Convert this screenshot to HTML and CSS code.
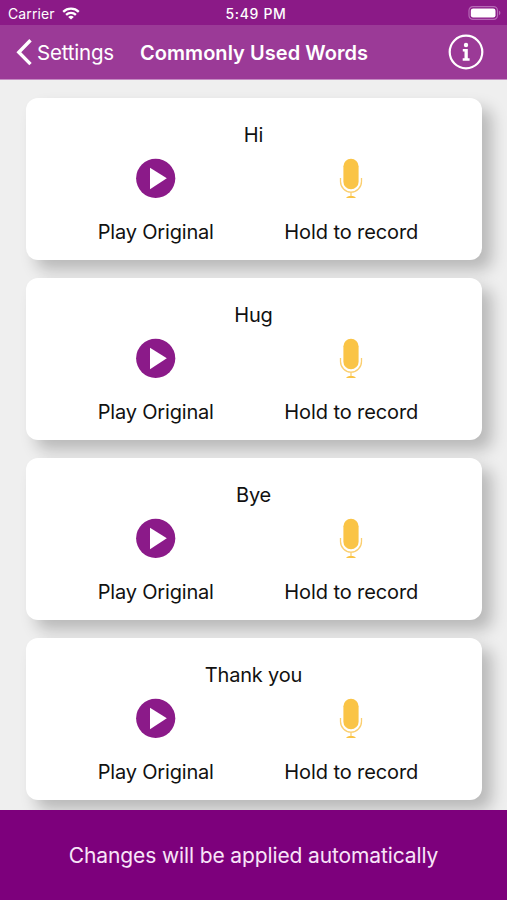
FILE: index.html
```html
<!DOCTYPE html>
<html lang="en">
<head>
<meta charset="utf-8">
<title>Commonly Used Words</title>
<link rel="stylesheet" href="styles.css">
</head>
<body>
<svg width="0" height="0" class="defs">
  <symbol id="play" viewBox="0 0 40 40">
    <circle cx="19.7" cy="20.3" r="19.6" fill="#8b1a89"/>
    <path d="M14 9.800 L30.800 20.300 L14 31.200 Z" fill="#fff"/>
  </symbol>
  <symbol id="mic" viewBox="0 0 24 40">
    <rect x="4.400" y="0.700" width="15.200" height="30.600" rx="7.600" fill="#fac446"/>
    <path d="M1.500 20v3.400a10.500 10.800 0 0 0 21 0V20M12 34.200v4" fill="none" stroke="#fbcf70" stroke-width="1.300"/>
    <path d="M7.200 39.900c.5-1.500 2.300-1.900 4.800-1.900s4.300.4 4.800 1.900z" fill="#fac446"/>
  </symbol>
</svg>
<div class="screen">
  <header>
    <div class="status">
      <div class="side"><span class="carrier">Carrier</span>
        <svg class="wifi" width="18" height="13" viewBox="0 0 18 13" fill="none" stroke="#fff" stroke-width="2.300">
          <path d="M1.200 4.800a11.200 11.200 0 0 1 15.600 0M4.100 7.900a7 7 0 0 1 9.800 0"/>
          <path d="M9 12.500 6.200 9.900a4.200 4.200 0 0 1 5.600 0z" fill="#fff" stroke="none"/>
        </svg>
      </div>
      <span class="time">5:49 PM</span>
      <div class="side end">
        <svg width="33" height="15" viewBox="0 0 33 15">
          <rect x="1" y="0.600" width="28.500" height="12.800" rx="4" fill="none" stroke="#b66ab6" stroke-width="1.200"/>
          <rect x="2.800" y="2.400" width="24.700" height="9.200" rx="2.300" fill="#fff"/>
          <path d="M31 4.800a2.400 2.400 0 0 1 0 4.400z" fill="#b66ab6"/>
        </svg>
      </div>
    </div>
    <nav>
      <svg class="chevron" width="17" height="28" viewBox="0 0 17 28"><path d="M15.500 2.300 3.800 14.200l11.700 11.900" fill="none" stroke="#fff" stroke-width="3.400"/></svg>
      <span class="back">Settings</span>
      <h1>Commonly Used Words</h1>
      <svg class="info" width="36" height="36" viewBox="0 0 36 36">
        <circle cx="18" cy="18" r="16.300" fill="none" stroke="#fff" stroke-width="2.200"/>
        <circle cx="18" cy="11" r="2.200" fill="#fff"/>
        <path d="M14.800 14.900h5v9.400h1.800v2.500h-6.900v-2.500h1.800v-6.900h-1.700z" fill="#fff"/>
      </svg>
    </nav>
  </header>
  <main>
    <section class="card"><h2>Hi</h2><div class="actions">
      <div class="action"><svg class="play"><use href="#play"/></svg><span class="play-label">Play Original</span></div>
      <div class="action"><svg class="mic"><use href="#mic"/></svg><span class="record-label">Hold to record</span></div></div></section>
    <section class="card"><h2>Hug</h2><div class="actions">
      <div class="action"><svg class="play"><use href="#play"/></svg><span class="play-label">Play Original</span></div>
      <div class="action"><svg class="mic"><use href="#mic"/></svg><span class="record-label">Hold to record</span></div></div></section>
    <section class="card"><h2>Bye</h2><div class="actions">
      <div class="action"><svg class="play"><use href="#play"/></svg><span class="play-label">Play Original</span></div>
      <div class="action"><svg class="mic"><use href="#mic"/></svg><span class="record-label">Hold to record</span></div></div></section>
    <section class="card"><h2>Thank you</h2><div class="actions">
      <div class="action"><svg class="play"><use href="#play"/></svg><span class="play-label">Play Original</span></div>
      <div class="action"><svg class="mic"><use href="#mic"/></svg><span class="record-label">Hold to record</span></div></div></section>
  </main>
  <footer><span>Changes will be applied automatically</span></footer>
</div>
</body>
</html>
```
FILE: styles.css
```css
* { box-sizing: border-box; }
body { margin: 0; font-family: Inter, "Liberation Sans", sans-serif; }
h1, h2 { margin: 0; }
.defs { display: none; }
.screen { height: 900px; display: flex; flex-direction: column; background: #efefef; overflow: hidden; }
header { flex: none; color: #fff; }
.status { height: 25px; background: #8b1a87; display: flex; align-items: center; padding: 2px 6px 0 8px; font-size: 14px; line-height: 20px; }
.side { flex: 1; display: flex; align-items: center; }
.end { justify-content: flex-end; }
.carrier { letter-spacing: 0.1px; }
.wifi { margin-left: 7px; }
.time { font-weight: 500; letter-spacing: 0.65px; margin-left: 3px; }
nav { height: 55px; background: #9b3a97; border-bottom: 1px solid #c58bc3; display: flex; align-items: center; padding: 0 23px 0 15px; }
.chevron { margin-right: 5px; }
.back { width: 103px; padding-top: 1px; font-size: 20.5px; letter-spacing: -0.2px; white-space: nowrap; }
h1 { padding-top: 1px; font-size: 20px; line-height: 28px; font-weight: 600; letter-spacing: 0.05px; white-space: nowrap; }
.info { margin-left: auto; }
main { flex: 1; min-height: 0; overflow: hidden; padding: 18px 25px 0 26px; display: flex; flex-direction: column; gap: 18px; }
.card { flex: none; height: 162px; background: #fff; border-radius: 12px; padding: 23px 33px 0 32px; box-shadow: 10px 10px 16px rgba(0, 0, 0, 0.23); color: #111; }
h2 { font-size: 20px; line-height: 28px; font-weight: 400; text-align: center; letter-spacing: -0.2px; }
.actions { display: grid; grid-template-columns: 1fr 1fr; padding-top: 9px; }
.action { display: flex; flex-direction: column; align-items: center; font-size: 20px; line-height: 28px; gap: 20px; white-space: nowrap; }
.play { width: 40px; height: 40px; }
.mic { width: 24px; height: 40px; }
.play-label { letter-spacing: -0.18px; }
.record-label { letter-spacing: -0.1px; }
footer { flex: none; height: 90px; padding-top: 1px; background: #7d007c; color: #f8e4f8; display: flex; align-items: center; justify-content: center; font-size: 21px; line-height: 30px; letter-spacing: -0.12px; white-space: nowrap; }
```
